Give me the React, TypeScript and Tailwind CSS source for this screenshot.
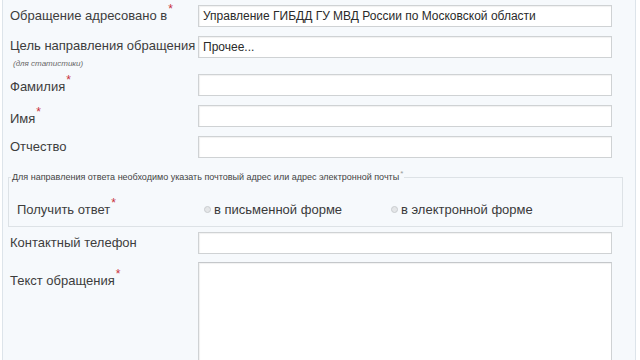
import React from 'react';

const Star: React.FC<{ className?: string }> = ({ className }) => (
  <span className={`relative -top-[7px] ml-[1px] text-[12px] leading-none text-[#c8323c] ${className ?? ''}`}>*</span>
);

const Field: React.FC<{ value?: string; className?: string }> = ({ value, className }) => (
  <div
    className={`w-[414px] h-[22px] border border-[#cfd2d4] bg-white shadow-[inset_1px_1px_1px_rgba(0,0,0,0.06)] px-[4px] flex items-center text-[12px] text-[#2a2a2a] ${className ?? ''}`}
  >
    {value}
  </div>
);

const Radio: React.FC<{ label: string }> = ({ label }) => (
  <label className="flex items-center gap-[3px] text-[13px] text-[#3a3a3a]">
    <span className="w-[7px] h-[7px] rounded-full border border-[#c9cccf] bg-[#e4e6e8]" />
    {label}
  </label>
);

const App: React.FC = () => {
  return (
    <div className="w-[640px] h-[360px] overflow-hidden bg-white font-['Liberation_Sans',Arial,sans-serif]">
      <div className="ml-[2px] w-[634px] h-[360px] border-x border-[#dde4ea] bg-[#f6f9fc] text-[#3d3d3d]">
        {/* Адресат */}
        <div className="flex items-center pt-[5px]">
          <div className="w-[195px] pl-[7px] text-[13px]">
            Обращение адресовано в<Star />
          </div>
          <Field value="Управление ГИБДД ГУ МВД России по Московской области" />
        </div>

        {/* Цель */}
        <div className="flex items-start mt-[9px] h-[22px]">
          <div className="w-[195px] pl-[7px] text-[13px] leading-[20px]">
            Цель направления обращения
            <div className="pl-[3px] mt-[3px] text-[8px] italic leading-[10px] text-[#666]">(для статистики)</div>
          </div>
          <Field value="Прочее..." />
        </div>

        {/* ФИО */}
        <div className="flex items-center mt-[15px]">
          <div className="w-[195px] pl-[7px] pt-[4px] text-[13px]">
            Фамилия<Star />
          </div>
          <Field />
        </div>
        <div className="flex items-center mt-[8px]">
          <div className="w-[195px] pl-[7px] pt-[4px] text-[13px]">
            Имя<Star />
          </div>
          <Field />
        </div>
        <div className="flex items-center mt-[8px]">
          <div className="w-[195px] pl-[7px] text-[13px]">Отчество</div>
          <Field />
        </div>

        {/* Способ ответа */}
        <fieldset className="ml-[5px] mt-[14px] w-[615px] h-[55px] border border-[#dde2e6] pl-[2px] pb-[2px]">
          <legend className="px-[1px] text-[9px] leading-[10px] text-[#444]">
            Для направления ответа необходимо указать почтовый адрес или адрес электронной почты
            <span className="relative -top-[4px] ml-[1px] text-[8px] text-[#999]">*</span>
          </legend>
          <div className="flex items-center mt-[17px] pl-[6px]">
            <div className="w-[186px] text-[13px]">
              Получить ответ<Star />
            </div>
            <div className="w-[188px] pl-[1px]">
              <Radio label="в письменной форме" />
            </div>
            <Radio label="в электронной форме" />
          </div>
        </fieldset>

        {/* Телефон */}
        <div className="flex items-center mt-[5px]">
          <div className="w-[195px] pl-[7px] text-[13px]">Контактный телефон</div>
          <Field />
        </div>

        {/* Текст */}
        <div className="flex items-start mt-[8px]">
          <div className="w-[195px] pl-[7px] pt-[9px] text-[13px]">
            Текст обращения<Star />
          </div>
          <div className="w-[414px] h-[120px] border border-[#cfd2d4] border-t-[#c4c7ca] bg-white shadow-[inset_1px_1px_1px_rgba(0,0,0,0.06)]" />
        </div>
      </div>
    </div>
  );
};

export default App;
